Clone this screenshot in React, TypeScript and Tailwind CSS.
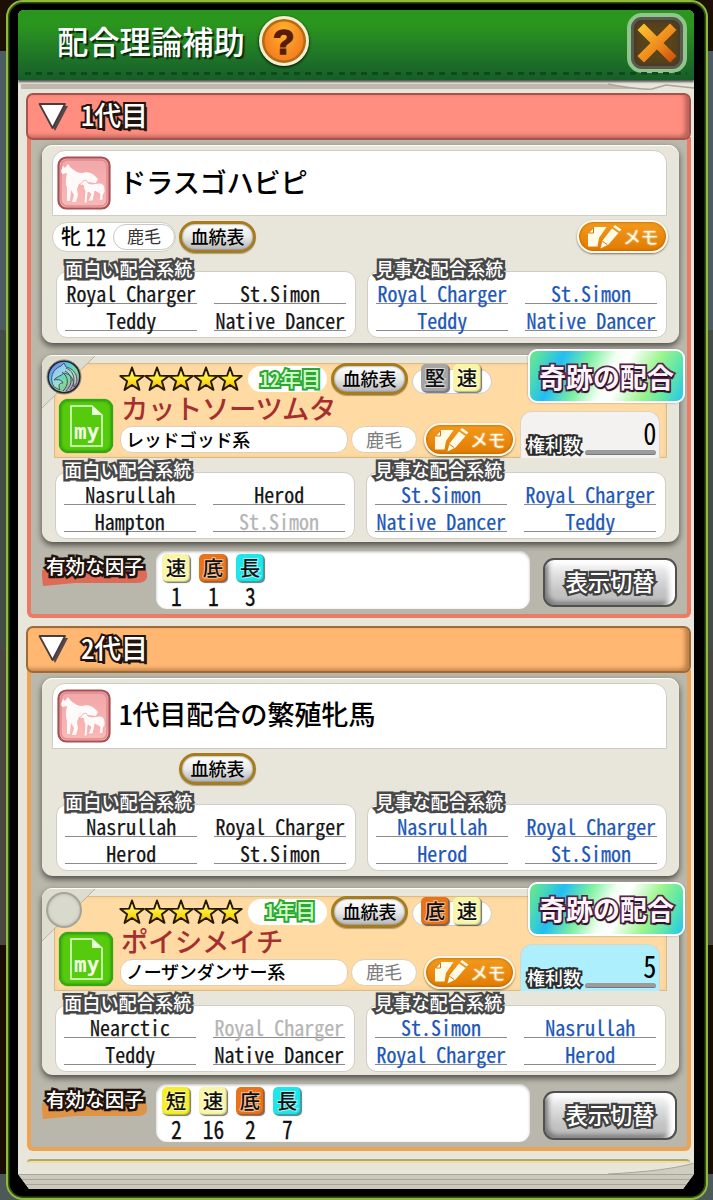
import React from 'react';
import clsx from 'clsx';

type Entry = { name: string; dim?: boolean };
type Factor = '短' | '速' | '底' | '長' | '堅';

interface Generation {
  title: string;
  tone: 'red' | 'orange';
  mare: { name: string; sex?: string; coat?: string; memo?: boolean };
  mareFun: Entry[];
  mareGreat: Entry[];
  stallion: {
    name: string;
    line: string;
    coat: string;
    year: string;
    factors: Factor[];
    rights: number;
    emblem: boolean;
  };
  stallionFun: Entry[];
  stallionGreat: Entry[];
  effective: { factor: Factor; count: number }[];
}

const generations: Generation[] = [
  {
    title: '1代目',
    tone: 'red',
    mare: { name: 'ドラスゴハビピ', sex: '牝', coat: '鹿毛', memo: true },
    mareFun: [{ name: 'Royal Charger' }, { name: 'St.Simon' }, { name: 'Teddy' }, { name: 'Native Dancer' }],
    mareGreat: [{ name: 'Royal Charger' }, { name: 'St.Simon' }, { name: 'Teddy' }, { name: 'Native Dancer' }],
    stallion: {
      name: 'カットソーツムタ', line: 'レッドゴッド系', coat: '鹿毛', year: '12年目',
      factors: ['堅', '速'], rights: 0, emblem: true,
    },
    stallionFun: [{ name: 'Nasrullah' }, { name: 'Herod' }, { name: 'Hampton' }, { name: 'St.Simon', dim: true }],
    stallionGreat: [{ name: 'St.Simon' }, { name: 'Royal Charger' }, { name: 'Native Dancer' }, { name: 'Teddy' }],
    effective: [{ factor: '速', count: 1 }, { factor: '底', count: 1 }, { factor: '長', count: 3 }],
  },
  {
    title: '2代目',
    tone: 'orange',
    mare: { name: '1代目配合の繁殖牝馬' },
    mareFun: [{ name: 'Nasrullah' }, { name: 'Royal Charger' }, { name: 'Herod' }, { name: 'St.Simon' }],
    mareGreat: [{ name: 'Nasrullah' }, { name: 'Royal Charger' }, { name: 'Herod' }, { name: 'St.Simon' }],
    stallion: {
      name: 'ポイシメイチ', line: 'ノーザンダンサー系', coat: '鹿毛', year: '1年目',
      factors: ['底', '速'], rights: 5, emblem: false,
    },
    stallionFun: [{ name: 'Nearctic' }, { name: 'Royal Charger', dim: true }, { name: 'Teddy' }, { name: 'Native Dancer' }],
    stallionGreat: [{ name: 'St.Simon' }, { name: 'Nasrullah' }, { name: 'Royal Charger' }, { name: 'Herod' }],
    effective: [{ factor: '短', count: 2 }, { factor: '速', count: 16 }, { factor: '底', count: 2 }, { factor: '長', count: 7 }],
  },
];

const factorColors: Record<Factor, string> = {
  '短': 'bg-[#f4ee2c]',
  '速': 'bg-[#f8f6a4]',
  '底': 'bg-[#e8731b]',
  '長': 'bg-[#1fe6ea]',
  '堅': 'bg-[#a5a5a5]',
};

const FactorChip: React.FC<{ factor: Factor }> = ({ factor }) => (
  <span
    className={clsx(
      'flex h-7 w-7 shrink-0 items-center justify-center rounded-[5px] shadow-[1px_1px_1px_rgba(0,0,0,0.55),inset_-1px_-1px_1px_rgba(0,0,0,0.25)]',
      factorColors[factor],
    )}
  >
    <span className="-mt-[1px] text-[20.5px] leading-none font-medium text-[#111] [paint-order:stroke_fill] [-webkit-text-stroke:2px_rgba(255,255,255,0.55)]">
      {factor}
    </span>
  </span>
);

const Star = () => (
  <svg viewBox="0.8 0.6 24.4 24.4" className="-mr-[1.5px] h-[26px] w-[26px]">
    <path
      d="M13 2 L15.7 9.6 L24 10 L17.6 15 L20 23 L13 18.4 L6 23 L8.4 15 L2 10 L10.3 9.6 Z"
      fill="url(#starFill)" stroke="#231a05" strokeWidth="1.8" strokeLinejoin="round"
    />
  </svg>
);

const MemoButton = () => (
  <button className="flex h-[33px] w-[91px] shrink-0 items-center rounded-full border-[2.5px] border-[#fff6e4] bg-linear-to-b from-[#f39a1c] to-[#e07b00] pl-[7px] shadow-[0_1px_2px_rgba(0,0,0,0.5),inset_0_0_3px_#a85a00]">
    <svg viewBox="0 0 36 26" className="h-[26px] w-9 shrink-0" fill="#fffbe6">
      <path d="M8 3 H20.5 L13 14 L11.5 22.5 H2 V9.5 Z" />
      <path d="M2.5 9 L7.5 3.6 V9 Z" stroke="#d27a0c" strokeWidth="1" />
      <path d="M26 4.5 L32.5 9 L22.5 20.5 L14.5 24.5 L16.5 16.5 Z" />
      <path d="M27.2 3 L29 1 L35.4 5.4 L33.7 7.6 Z" />
      <path d="M16.3 17.2 L21.2 20.6" stroke="#d27a0c" strokeWidth="1" />
    </svg>
    <span className="-mt-[1px] ml-px text-[18px] leading-none tracking-[-0.5px] text-[#fffbe6] [text-shadow:0_0_2px_#fff]">メモ</span>
  </button>
);

const PedigreeButton = () => (
  <button className="flex h-8 w-[77px] shrink-0 items-center justify-center rounded-full border-[3px] border-[#a67c1c] bg-linear-to-b from-white via-[#e9e9e9] to-[#b5b5b5] shadow-[0_1px_1px_rgba(0,0,0,0.3),inset_0_0_2px_#555]">
    <span className="-mt-[2px] text-[18px] leading-none font-medium whitespace-nowrap text-black">血統表</span>
  </button>
);

const MareIcon = () => (
  <svg viewBox="0 0 54 54" className="h-[54px] w-[54px] shrink-0">
    <rect x="1.5" y="1.5" width="51" height="51" rx="8" fill="url(#mareFill)" stroke="#a85054" strokeWidth="2.2" />
    <rect x="4" y="4" width="46" height="46" rx="6" fill="none" stroke="#dc8d90" strokeWidth="1.5" />
    <path
      d="M6 10 L8 12 L11 8 L14 12 C18 15 21 17 25 17 C30 15 35 17 37 19 L41 23 L39 27 L31 26 L22 28 L20 33 L21 39 L19 46 H15 L17 39 L14 34 L13 45 H10 L10 32 C8 27 9 22 10 17 L5 18 L4 15 Z"
      fill="#fffafa"
    />
    <path
      d="M22 30 L26 25 L29 24 L31 27 C35 29 39 27 43 27 C48 28 48 32 48 36 L46 39 L46 44 L42 45 L43 38 L38 35 L36 45 H31 L34 38 L31 36 L30 47 L27 47 L28 35 C26 32 27 30 26 29 Z"
      fill="#fffafa" stroke="#f2a9aa" strokeWidth="0.8"
    />
  </svg>
);

const MyIcon = () => (
  <div className="flex h-[54px] w-[54px] shrink-0 rounded-[9px] border-2 border-[#2fa90f] bg-[#56cb0d] shadow-[0_0_1px_#197a08,inset_0_0_3px_#278f0c]">
    <div className="relative">
      <svg viewBox="0 0 50 50" className="h-[50px] w-[50px]">
        <path d="M10 5 H31 L41 14 V45 H10 Z" fill="none" stroke="#e8ffd9" strokeWidth="1.5" />
        <path d="M31 5 V14 H41 Z" fill="#e8ffd9" />
      </svg>
      <span className="absolute top-[21px] left-[13px] bg-[#56cb0d] font-['DejaVu_Sans_Mono',monospace] text-[21px] leading-[20px] font-bold text-[#f2ffe8]">
        my
      </span>
    </div>
  </div>
);

const Emblem: React.FC<{ lit: boolean }> = ({ lit }) =>
  lit ? (
    <svg viewBox="0 0 36 36" className="h-9 w-9">
      <circle cx="18" cy="18" r="17" fill="#28262c" stroke="#8b8a84" strokeWidth="1" />
      <circle cx="18" cy="18" r="15" fill="url(#emblemFill)" />
      <path d="M8 28 C3 20 6 10 15 7 L18 4 L20 8 C30 10 34 21 28 28 C28 19 24 15 18 14 C15 17 10 18 8 21 C12 20 16 21 17 24 C13 24 12 26 14 31 Z" fill="#e9e6f6" fillOpacity=".4" stroke="#49405f" strokeWidth="0.9" />
      <path d="M20 9 C28 12 31 22 24 31 M19 12 C27 16 27 25 20 32 M16 13 C23 18 23 26 17 32" fill="none" stroke="#544467" strokeWidth="1" />
    </svg>
  ) : (
    <div className="h-9 w-9 rounded-full border-2 border-[#a5a598] bg-[#d9d9cd] shadow-[inset_0_0_3px_#aaa]" />
  );

const LineageBox: React.FC<{ title: string; entries: Entry[]; blue?: boolean }> = ({ title, entries, blue }) => (
  <div className="flex w-[300px] flex-col">
    <h4 className="relative z-10 -mb-[10px] ml-[9px] h-[22px] text-[18.2px] leading-[19px] font-medium whitespace-nowrap text-white [paint-order:stroke_fill] [-webkit-text-stroke:5px_#484848]">
      {title}
    </h4>
    <div className="grid h-[67px] grid-cols-[132px_132px] content-start gap-x-[17px] rounded-[11px] border border-[#cfcec4] bg-white px-2 pt-[5px]">
      {entries.map((entry, i) => (
        <div key={i} className="flex h-[27px] items-end justify-center border-b border-[#8b8b8b]">
          <span
            className={clsx(
              "-mb-px scale-x-[0.95] text-[21px] leading-[21px] whitespace-pre [font-feature-settings:'hwid'] [-webkit-text-stroke:0.25px_currentColor]",
              blue ? 'text-[#1d57b8]' : entry.dim ? 'text-[#b5b5b5]' : 'text-[#141414]',
            )}
          >
            {entry.name}
          </span>
        </div>
      ))}
    </div>
  </div>
);

const LineageRow: React.FC<{ fun: Entry[]; great: Entry[] }> = ({ fun, great }) => (
  <div className="flex gap-[11px]">
    <LineageBox title="面白い配合系統" entries={fun} />
    <LineageBox title="見事な配合系統" entries={great} blue />
  </div>
);

const MareCard: React.FC<{ gen: Generation }> = ({ gen }) => (
  <div className="h-[198px] w-[637px] rounded-[11px] bg-[#e8e6da] pt-[5px] pr-[12px] pl-[10px] shadow-[0_3px_6px_rgba(0,0,0,0.6),inset_0_1px_1px_#fff]">
    <div className="flex h-[66px] items-center rounded-t-[13px] border border-[#cfcdc2] bg-white pl-1">
      <MareIcon />
      <h3 className="-mt-[3px] ml-[8px] text-[27.3px] leading-none font-medium tracking-[-0.3px] text-black [font-feature-settings:'hwid']">{gen.mare.name}</h3>
    </div>
    <div className="mt-1 flex h-[33px] items-center">
      {gen.mare.sex ? (
        <div className="flex h-[30px] w-[124px] items-center rounded-full border border-[#cfcdc2] bg-white pl-2">
          <span className="-mt-[1px] text-[20px] leading-none font-medium">{gen.mare.sex}</span>
          <span className="-mt-[1px] ml-[3px] scale-x-[0.85] text-[24px] leading-none [font-feature-settings:'hwid'] [-webkit-text-stroke:0.3px_#111]">12</span>
          <span className="ml-[5px] flex h-[26px] w-[62px] items-center justify-center rounded-full border border-[#c9c9c5]">
            <span className="-mt-[2px] text-[17px] leading-none text-[#333]">{gen.mare.coat}</span>
          </span>
        </div>
      ) : (
        <div className="w-[124px]" />
      )}
      <div className="ml-[3px]">
        <PedigreeButton />
      </div>
      {gen.mare.memo && <div className="-mr-[1px] ml-auto"><MemoButton /></div>}
    </div>
    <div className="mt-[6px] ml-[4px]">
      <LineageRow fun={gen.mareFun} great={gen.mareGreat} />
    </div>
  </div>
);

const StallionCard: React.FC<{ gen: Generation }> = ({ gen }) => {
  const s = gen.stallion;
  return (
    <div className="relative mt-3 h-[187px] w-[637px] rounded-[11px] bg-[#e8e6da] pt-2 pl-3 shadow-[0_3px_6px_rgba(0,0,0,0.6),inset_0_1px_1px_#fff]">
      <div className="flex h-[95px] w-[613px] border border-[#d9bd88] bg-[#ffdba3] shadow-[inset_0_0_4px_#f3c98a]">
        <div className="flex w-[65px] shrink-0 items-end pb-1 pl-1">
          <MyIcon />
        </div>
        <div className="w-[400px] shrink-0">
          <div className="flex h-[30px] items-center">
            <div className="-ml-px flex w-[129px]">
              {[0, 1, 2, 3, 4].map((i) => <Star key={i} />)}
            </div>
            <div className="flex h-[26px] w-[79px] items-center justify-center rounded-full bg-white pl-[6px]">
              <span className="-mt-[2px] text-[20.5px] leading-none font-medium text-[#d2fbc8] [font-feature-settings:'hwid'] [paint-order:stroke_fill] [-webkit-text-stroke:4px_#2aa832]">
                {s.year}
              </span>
            </div>
            <div className="ml-1">
              <PedigreeButton />
            </div>
            <div className="mt-1 ml-[4px] flex h-[25px] w-[80px] items-center gap-[4px] rounded-full border border-[#ccc] bg-white pb-[6px] pl-[8px]">
              {s.factors.map((f) => <FactorChip key={f} factor={f} />)}
            </div>
          </div>
          <h3 className="mt-[-1px] ml-[1px] h-[34px] text-[27.3px] leading-[28px] font-medium tracking-[-0.3px] whitespace-nowrap text-[#a52f2f]">{s.name}</h3>
          <div className="mt-[-4px] flex h-[33px] items-center">
            <div className="flex h-[27px] w-[228px] items-center rounded-[12px] border border-[#d9cfba] bg-white pl-[5px]">
              <span className="-mt-[2px] text-[18px] leading-none font-medium tracking-[-0.3px] whitespace-nowrap text-black">{s.line}</span>
            </div>
            <div className="ml-[3px] flex h-[27px] w-[66px] items-center justify-center rounded-full border border-[#d9cfba] bg-white">
              <span className="-mt-[2px] text-[18px] leading-none text-[#7c7c7c]">{s.coat}</span>
            </div>
            <div className="ml-[7px]">
              <MemoButton />
            </div>
          </div>
        </div>
        <div
          className={clsx(
            'mt-[47px] flex h-[47px] w-[140px] items-end rounded-t-[12px] border-x border-t border-[#d8d5c8] pl-[6px]',
            s.rights > 0 ? 'bg-[#aeeffd]' : 'bg-[#f3f2f0]',
          )}
        >
          <span className="mb-[4px] text-[18px] leading-[20px] font-medium whitespace-nowrap text-white [paint-order:stroke_fill] [-webkit-text-stroke:4px_#2c2c2c]">
            権利数
          </span>
          <div className="ml-[4px] flex w-[71px] flex-col items-end">
            <span className="h-[30px] origin-right scale-x-[0.85] text-[31px] leading-[24px] [font-feature-settings:'hwid']">{s.rights}</span>
            <div className="mb-[3px] h-[5px] w-full rounded-sm border-b border-[#777] bg-[#9b9b9b]" />
          </div>
        </div>
      </div>
      <div className="mt-[2px] ml-[1px]">
        <LineageRow fun={gen.stallionFun} great={gen.stallionGreat} />
      </div>

      {/* folded corner with the emblem */}
      <div className="absolute top-0 left-0 h-[53px] w-[53px]">
        <svg viewBox="0 0 53 53" className="absolute inset-0 h-[53px] w-[53px]">
          <path d="M53 1 L0 53 V11 Q0 1 10 1 Z" fill="#dedccf" />
          <path d="M53 1 L0 53" stroke="#b9b19c" strokeWidth="1" />
        </svg>
        <div className="absolute top-[4px] left-[4px]">
          <Emblem lit={s.emblem} />
        </div>
      </div>

      <div className="absolute top-[-6px] left-[486px] flex h-[54px] w-[157px] items-center justify-center rounded-[9px] border-[2.5px] border-white bg-[linear-gradient(115deg,#6fe884_0%,#4fdcb0_8%,#22bdf4_20%,#7df0a0_36%,#f4fff4_50%,#ffffff_58%,#9af58c_76%,#5ee6a8_88%,#22c4f4_100%)] shadow-[0_0_2px_#888]">
        <span className="text-[27px] leading-none font-bold whitespace-nowrap text-[#fff4fb] [paint-order:stroke_fill] [text-shadow:1px_2px_1px_#2a1028] [-webkit-text-stroke:3.5px_#56284c]">
          奇跡の配合
        </span>
      </div>
    </div>
  );
};

const EffectiveRow: React.FC<{ gen: Generation }> = ({ gen }) => (
  <div className="mt-[9px] flex h-[58px]">
    <div className="relative mt-[4px] ml-[-1px] h-[30px] w-[115px]">
      <svg viewBox="0 0 110 30" className="absolute top-0 left-0 h-[32px] w-[110px]">
        <path
          d="M1 14 L98 9 Q107 12 106 21 Q105 27 95 27 L34 27 L2 30 L1 20 Z"
          fill={gen.tone === 'red' ? '#dd6b57' : '#df9344'}
        />
      </svg>
      <span className="relative ml-[5px] block text-[19.6px] leading-[22px] font-medium whitespace-nowrap text-white [paint-order:stroke_fill] [text-shadow:2px_2px_0_#20120c] [-webkit-text-stroke:5px_#20120c]">
        有効な因子
      </span>
    </div>
    <div className="flex w-[374px] gap-[9px] rounded-[11px] bg-white pt-[3px] pl-[6px] shadow-[inset_0_1px_3px_#bbb]">
      {gen.effective.map(({ factor, count }) => (
        <div key={factor} className="flex w-7 flex-col items-center">
          <FactorChip factor={factor} />
          <span className="mt-[2px] ml-px scale-x-[0.86] text-[25px] leading-[22px] text-[#111] [font-feature-settings:'hwid'] [-webkit-text-stroke:0.3px_#111]">{count}</span>
        </div>
      ))}
    </div>
    <button className="mt-[7px] ml-[13px] flex h-[49px] w-[134px] items-center justify-center rounded-[11px] border-2 border-[#505050] bg-[linear-gradient(#fff,#e2e2e2_30%,#c4c4c4_70%,#bdbdbd)] shadow-[inset_-6px_3px_5px_#fff,inset_3px_-3px_5px_#777]">
      <span className="-mt-[2px] text-[22.3px] leading-none font-medium whitespace-nowrap text-white [paint-order:stroke_fill] [-webkit-text-stroke:4.5px_#404040]">
        表示切替
      </span>
    </button>
  </div>
);

const GenerationPanel: React.FC<{ gen: Generation }> = ({ gen }) => {
  const red = gen.tone === 'red';
  return (
    <section className="flex h-[525px] w-[665px] flex-col">
      <header
        className={clsx(
          'z-10 flex h-[47px] shrink-0 items-center rounded-[7px] border-2 pl-[10px]',
          red
            ? 'border-[#a4544c] bg-[#ff8e80] shadow-[inset_-4px_-2px_4px_#b9625a]'
            : 'border-[#a06a34] bg-[#ffb771] shadow-[inset_-4px_-2px_4px_#bb8048]',
        )}
      >
        <svg viewBox="0 0 32 30" className="h-[30px] w-8">
          <path d="M4 4 H30 L17 29 Z" fill="#55484a" />
          <path d="M1.5 2 H27 L14.5 26 Z" fill="#fff" stroke="#4b3c3c" strokeWidth="1.8" strokeLinejoin="round" />
        </svg>
        <h2 className="-mt-[4px] ml-[11px] text-[27px] leading-none font-medium tracking-[-0.2px] text-white [font-feature-settings:'hwid'] [paint-order:stroke_fill] [text-shadow:3px_3px_0_#24130c] [-webkit-text-stroke:4px_#24130c]">
          {gen.title}
        </h2>
      </header>
      <div
        className={clsx(
          'mt-[-3px] ml-px flex-1 rounded-b-[6px] border-x-[4px] border-b-[4px] bg-linear-to-b from-[#bab8aa] to-[#b9b6ab] pt-[8px] pl-[11px]',
          red ? 'border-[#eb7b65]' : 'border-[#eca354]',
        )}
      >
        <MareCard gen={gen} />
        <StallionCard gen={gen} />
        <EffectiveRow gen={gen} />
      </div>
    </section>
  );
};

const SharedDefs = () => (
  <svg className="absolute h-0 w-0">
    <defs>
      <linearGradient id="starFill" x1="0" y1="0" x2="0" y2="1">
        <stop offset="0" stopColor="#fff9c0" />
        <stop offset="0.5" stopColor="#ffe92b" />
        <stop offset="1" stopColor="#f3b200" />
      </linearGradient>
      <linearGradient id="mareFill" x1="0" y1="0" x2="0" y2="1">
        <stop offset="0" stopColor="#f2a6a8" />
        <stop offset="1" stopColor="#fbb9b8" />
      </linearGradient>
      <linearGradient id="emblemFill" x1="0" y1="0" x2="1" y2="1">
        <stop offset="0" stopColor="#8a58d8" />
        <stop offset="0.3" stopColor="#58c4ee" />
        <stop offset="0.6" stopColor="#76e09a" />
        <stop offset="1" stopColor="#e070b8" />
      </linearGradient>
      <linearGradient id="crossFill" x1="0" y1="0" x2="1" y2="1">
        <stop offset="0" stopColor="#ffcc33" />
        <stop offset="0.55" stopColor="#ef8b1c" />
        <stop offset="1" stopColor="#c84a05" />
      </linearGradient>
    </defs>
  </svg>
);

export default function App() {
  return (
    <div className="h-[1200px] w-[713px] overflow-hidden bg-[linear-gradient(#1c0f05_0_51px,#4c5c60_51px_330px,#454b45_330px_650px,#4a4740_650px_945px,#190c05_945px_1174px,#4d5859_1174px)] pl-[6px] font-['Noto_Sans_CJK_JP',sans-serif]">
      <SharedDefs />
      <div className="h-[1200px] w-[702px] rounded-[17px] border-2 border-[#8fbb39] bg-black px-[10px] pt-2 shadow-[inset_0_0_0_1.5px_#33501a]">
        <div className="flex h-[1179px] w-[676px] flex-col overflow-hidden rounded-t-[6px] bg-[#e8e6da] [clip-path:polygon(0_0,100%_0,100%_1164px,665px_100%,11px_100%,0_1164px)]">
          <header className="flex h-[70px] shrink-0 flex-col bg-linear-to-b from-[#2b961d] from-20% to-[#175d29] shadow-[0_2px_2px_#555]">
            <div className="flex h-[62px] items-center pl-[39px]">
              <h1 className="text-[31.3px] leading-none font-medium whitespace-nowrap text-white [text-shadow:2px_2px_1px_#0a2a0a]">配合理論補助</h1>
              <button className="ml-[14px] flex h-[50px] w-[50px] items-center justify-center rounded-full border-[3px] border-[#f6eed0] bg-radial-[at_50%_30%] from-[#ffb52c] to-[#f0641a] shadow-[0_1px_3px_#000,inset_0_0_0_2.5px_#b06c14]">
                <span className="font-['Liberation_Sans',sans-serif] text-[35px] leading-none font-bold text-[#5a1c08] [-webkit-text-stroke:1.5px_#5a1c08]">?</span>
              </button>
              <button className="mt-[4px] mr-[7px] ml-auto flex h-[60px] w-[60px] items-center justify-center rounded-[15px] border-[4px] border-[#90c68c] bg-[#58431a] shadow-[inset_0_0_0_3px_#5c5a50,inset_0_0_6px_3px_#333]">
                <svg viewBox="0 0 40 40" className="h-10 w-10">
                  <path d="M7 0.5 L20 13.5 L33 0.5 L39.5 7 L26.5 20 L39.5 33 L33 39.5 L20 26.5 L7 39.5 L0.5 33 L13.5 20 L0.5 7 Z" fill="url(#crossFill)" />
                </svg>
              </button>
            </div>
            <div className="mx-[7px] h-[3px] bg-[repeating-linear-gradient(90deg,#0f4a1d_0_6px,transparent_6px_11.2px)]" />
          </header>
          <svg viewBox="0 0 676 13" className="h-[13px] w-[676px] shrink-0">
            <path d="M3 4 H588 Q615 9 632 9 H3 Z" fill="#bdbaad" />
            <path d="M590 4 Q620 10 634 9 L648 5 L676 8" fill="none" stroke="#a9a698" strokeWidth="1.5" />
          </svg>
          <main className="flex flex-col gap-[7.6px] pl-2">
            {generations.map((gen) => <GenerationPanel key={gen.title} gen={gen} />)}
          </main>
          <div className="mt-[8px] ml-[9px] h-[4px] w-[663px] shrink-0 rounded-t-md border-t-2 border-[#aea76f] bg-[#f0dfa0]" />
          <svg viewBox="0 0 676 11" className="h-[11px] w-[676px] shrink-0">
            <path d="M590 11 Q650 8 676 0 V11 Z" fill="#cfcdbf" />
            <path d="M590 11 Q650 8 676 0" fill="none" stroke="#a9a698" />
          </svg>
          <div className="min-h-[15px] flex-1 bg-[repeating-linear-gradient(#a7a598_0_1px,#cbc9bc_1px_5px)]" />
        </div>
      </div>
    </div>
  );
}
